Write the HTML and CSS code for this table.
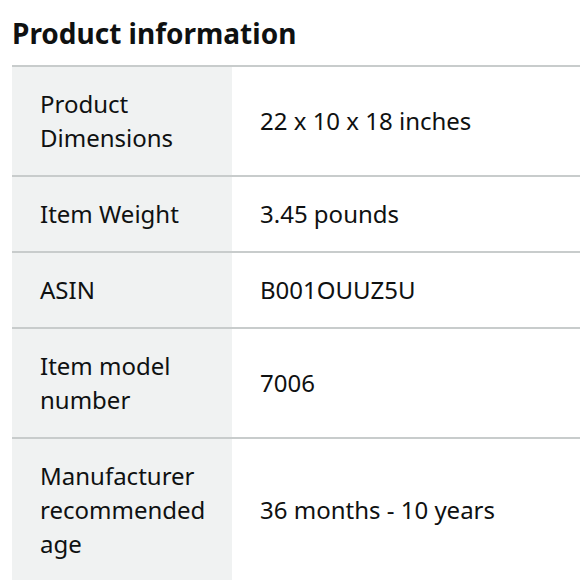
FILE: index.html
```html
<!DOCTYPE html>
<html lang="en">
<head>
<meta charset="utf-8">
<title>Product information</title>
<link rel="stylesheet" href="styles.css">
</head>
<body>
<div class="page">
  <h1 class="title">Product information</h1>
  <table class="specs">
    <tbody>
      <tr>
        <th class="label">Product<br>Dimensions</th>
        <td class="value">22 x 10 x 18 inches</td>
      </tr>
      <tr>
        <th class="label">Item Weight</th>
        <td class="value">3.45 pounds</td>
      </tr>
      <tr>
        <th class="label">ASIN</th>
        <td class="value">B001OUUZ5U</td>
      </tr>
      <tr>
        <th class="label">Item model<br>number</th>
        <td class="value">7006</td>
      </tr>
      <tr>
        <th class="label">Manufacturer<br>recommended<br>age</th>
        <td class="value">36 months - 10 years</td>
      </tr>
    </tbody>
  </table>
</div>
</body>
</html>
```
FILE: styles.css
```css
html, body {
  margin: 0;
  padding: 0;
  background: #ffffff;
  overflow: hidden;
}
body {
  font-family: "Noto Sans", "Open Sans", sans-serif;
  color: #0f1111;
}
.page {
  padding: 13px 0 0 12px;
}
.title {
  margin: 0;
  font-size: 28px;
  line-height: 40px;
  font-weight: 700;
  padding-bottom: 12px;
}
.specs {
  width: 568px;
  border-collapse: collapse;
  border-top: 2px solid #c8cccc;
}
.specs tr {
  border-bottom: 2px solid #c8cccc;
}
.label, .value {
  padding: 20px 0 20px 28px;
  font-size: 24px;
  line-height: 34px;
  font-weight: 400;
  text-align: left;
  vertical-align: middle;
}
.label {
  width: 192px;
  background: #f0f2f2;
}
```
